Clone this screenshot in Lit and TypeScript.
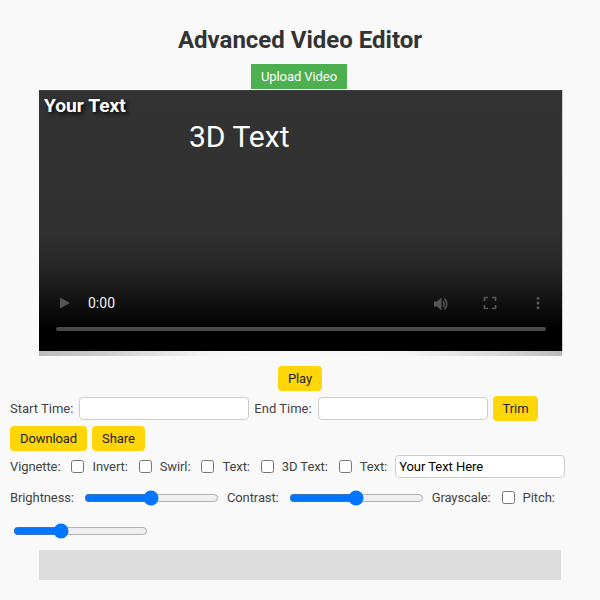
import { LitElement, html, css } from "lit";
import { customElement } from "lit/decorators.js";

@customElement("app-root")
export class AppRoot extends LitElement {
  static styles = css`
    :host {
      display: block;
      min-height: 600px;
      background: #f9f9f9;
      font-family: Roboto, "Liberation Sans", sans-serif;
      color: #444;
      font-size: 13px;
    }
    .page {
      padding: 0 10px;
      height: 600px;
      box-sizing: border-box;
      overflow: hidden;
    }
    h1 {
      margin: 0;
      padding-top: 26px;
      height: 38px;
      font-size: 24px;
      line-height: 28px;
      font-weight: 700;
      color: #333;
      text-align: center;
      box-sizing: content-box;
    }
    .center {
      display: flex;
      justify-content: center;
    }
    .upload {
      width: 96px;
      height: 25px;
      background: #4caf50;
      color: #fff;
      font-size: 13px;
      letter-spacing: -0.08px;
      display: flex;
      align-items: center;
      justify-content: center;
      margin-bottom: 1px;
      margin-right: 2px;
    }
    .video {
      position: relative;
      width: 524px;
      height: 261px;
      margin-left: 29px;
      box-sizing: border-box;
      background: linear-gradient(#4a4a4a 0, #333 1px, #303030 55%, #262626 68%, #000 92%, #000 100%);
      border-right: 1px solid #ccc;
      color: #fff;
    }
    .video::after {
      content: "";
      position: absolute;
      left: 0;
      right: 0;
      top: 100%;
      height: 5px;
      background: linear-gradient(90deg, #bbb 0%, #ccc 12%, #f5f5f5 32%, #f9f9f9 50%, #f5f5f5 70%, #d8d8d8 88%, #bbb 100%);
    }
    .your-text {
      position: absolute;
      left: 5px;
      top: 4px;
      font-size: 19.2px;
      line-height: 24px;
      font-weight: 700;
      text-shadow: 2px 2px 4px #000;
    }
    .three-d {
      position: absolute;
      left: 150px;
      top: 29px;
      font-size: 30px;
      line-height: 36px;
    }
    .ctl {
      position: absolute;
      display: block;
    }
    .time {
      position: absolute;
      left: 49px;
      top: 205px;
      font-size: 14px;
      line-height: 17px;
      color: #eee;
    }
    .track {
      position: absolute;
      left: 17px;
      top: 237px;
      width: 490px;
      height: 4px;
      border-radius: 2px;
      background: #4a4a4a;
    }
    .play-row {
      margin-top: 15px;
    }
    button {
      font: inherit;
      height: 25px;
      padding: 0 10px;
      background: #ffd60a;
      color: #222;
      border: none;
      border-radius: 4px;
      font-size: 13px;
      letter-spacing: -0.1px;
      line-height: 25px;
    }
    .row {
      display: flex;
      align-items: center;
      flex-wrap: wrap;
      height: 25px;
      gap: 5px;
    }
    .r1 { margin-top: 5px; }
    .r2 { margin-top: 5px; }
    .r3 { margin-top: 3px; gap: 0; letter-spacing: -0.1px; }
    .r4 { margin-top: 6px; gap: 0; letter-spacing: -0.1px; }
    .r5 { margin-top: 8px; }
    input[type="text"] {
      box-sizing: border-box;
      width: 170px;
      height: 23px;
      border: 1px solid #ccc;
      border-radius: 4px;
      background: #fff;
      padding: 0 3px;
      font: inherit;
      font-size: 13px;
      letter-spacing: -0.05px;
      color: #000;
      margin: 0;
      outline: none;
    }
    input.labelled[type="text"] { margin-left: 1px; }
    input[type="checkbox"] {
      margin: 0 8px 0 11px;
      width: 13px;
      height: 13px;
    }
    input[type="range"] {
      width: 135px;
      margin: 0 8px 0 10px;
    }
    .r5 input[type="range"] {
      margin: 0 0 0 3px;
    }
    .bar {
      width: 522px;
      height: 30px;
      margin-left: 29px;
      margin-top: 7px;
      background: #ddd;
    }
    input.last[type="text"] { margin-left: 8px; }
  `;

  render() {
    return html`
      <div class="page">
        <h1>Advanced Video Editor</h1>
        <div class="center"><div class="upload">Upload Video</div></div>
        <div class="video">
          <div class="your-text">Your Text</div>
          <div class="three-d">3D Text</div>
          <svg class="ctl" style="left:18px;top:205px" width="16" height="16" viewBox="0 0 16 16">
            <path d="M3 2.5 L13 8 L3 13.5 Z" fill="#555"></path>
          </svg>
          <div class="time">0:00</div>
          <svg class="ctl" style="left:393px;top:205px" width="18" height="18" viewBox="0 0 18 18">
            <path d="M2 6.5 H5 L9.5 2.5 V15.5 L5 11.5 H2 Z" fill="#555"></path>
            <path d="M11 6 Q13 9 11 12 M12.5 3.5 Q17 9 12.5 14.5" fill="none" stroke="#555" stroke-width="1.6"></path>
          </svg>
          <svg class="ctl" style="left:444px;top:206px" width="14" height="14" viewBox="0 0 14 14">
            <path d="M1.5 5 V1.5 H5 M9 1.5 H12.5 V5 M12.5 9 V12.5 H9 M5 12.5 H1.5 V9" fill="none" stroke="#555" stroke-width="1.7"></path>
          </svg>
          <svg class="ctl" style="left:496px;top:206px" width="6" height="14" viewBox="0 0 6 14">
            <circle cx="3" cy="2.2" r="1.5" fill="#555"></circle>
            <circle cx="3" cy="7" r="1.5" fill="#555"></circle>
            <circle cx="3" cy="11.8" r="1.5" fill="#555"></circle>
          </svg>
          <div class="track"></div>
        </div>
        <div class="center play-row"><button>Play</button></div>
        <div class="row r1">
          <span>Start Time:</span><input class="labelled" type="text" />
          <span>End Time:</span><input class="labelled" type="text" />
          <button>Trim</button>
        </div>
        <div class="row r2"><button>Download</button><button>Share</button></div>
        <div class="row r3">
          <span>Vignette:</span><input type="checkbox" />
          <span>Invert:</span><input type="checkbox" />
          <span>Swirl:</span><input type="checkbox" />
          <span>Text:</span><input type="checkbox" />
          <span>3D Text:</span><input type="checkbox" />
          <span>Text:</span>
          <input class="last" type="text" value="Your Text Here" />
        </div>
        <div class="row r4">
          <span>Brightness:</span><input type="range" />
          <span>Contrast:</span><input type="range" />
          <span>Grayscale:</span><input type="checkbox" />
          <span>Pitch:</span>
        </div>
        <div class="row r5"><input type="range" min="0" max="100" value="34" /></div>
        <div class="bar"></div>
      </div>
    `;
  }
}
